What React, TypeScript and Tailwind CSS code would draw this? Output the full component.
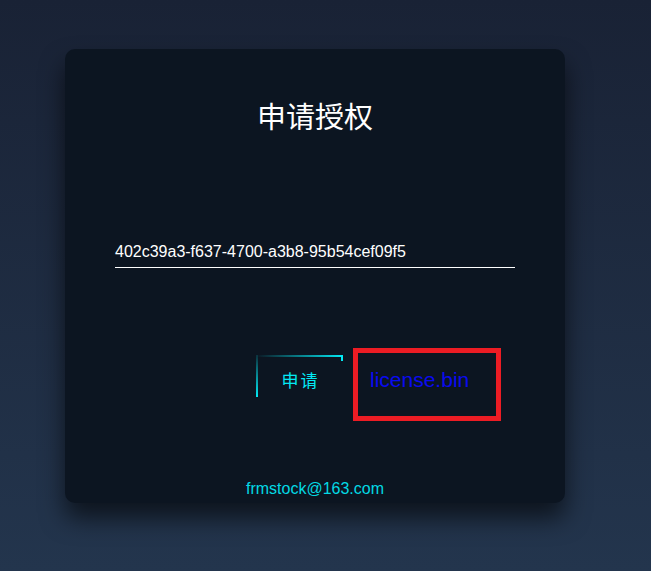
import React from 'react';

const App: React.FC = () => {
  return (
    <div className="w-full h-[571px] overflow-hidden bg-gradient-to-b from-[#192235] to-[#23354d] pt-[49px] pl-[65px]">
      {/* Card */}
      <div className="w-[500px] h-[454px] bg-[#0c1521] rounded-[10px] shadow-[0_15px_25px_rgba(0,0,0,0.6)] px-[50px] pt-[48px] flex flex-col">
        <h2 className="text-white text-center text-[29px] leading-[36px] font-['Noto_Sans_CJK_SC',serif]">
          申请授权
        </h2>

        {/* Input */}
        <div className="mt-[96px] border-b border-white pt-[14px] pb-[6px] text-white text-[16px] leading-[18px] font-['Liberation_Sans',sans-serif]">
          402c39a3-f637-4700-a3b8-95b54cef09f5
        </div>

        {/* Actions */}
        <div className="mt-[80px] flex items-start">
          <button className="relative overflow-hidden ml-[141px] mt-[7px] w-[87px] h-[48px] flex items-center justify-center text-[#03e9f4] text-[17px] tracking-[2px] font-['Noto_Sans_CJK_SC',sans-serif]">
            <span className="absolute top-0 left-0 w-full h-[2px] bg-gradient-to-r from-transparent to-[#03e9f4]" />
            <span className="absolute top-0 right-0 w-[2px] h-[6px] bg-[#03e9f4]" />
            <span className="absolute left-0 bottom-[6px] w-[2px] h-full bg-gradient-to-t from-[#03e9f4] to-transparent" />
            <span className="pl-[2px] pt-[2px]">申请</span>
          </button>
          <div className="ml-[10px] w-[148px] h-[73px] border-[5px] border-[#ed1c24] pl-[12px] pt-[15px] text-[#0a0af0] text-[21px] leading-[24px] font-['Liberation_Sans',sans-serif]">
            license.bin
          </div>
        </div>

        <div className="mt-[58px] text-center text-[#03d9e4] text-[16px] leading-[20px] font-['Liberation_Sans',sans-serif]">
          frmstock@163.com
        </div>
      </div>
    </div>
  );
};

export default App;
